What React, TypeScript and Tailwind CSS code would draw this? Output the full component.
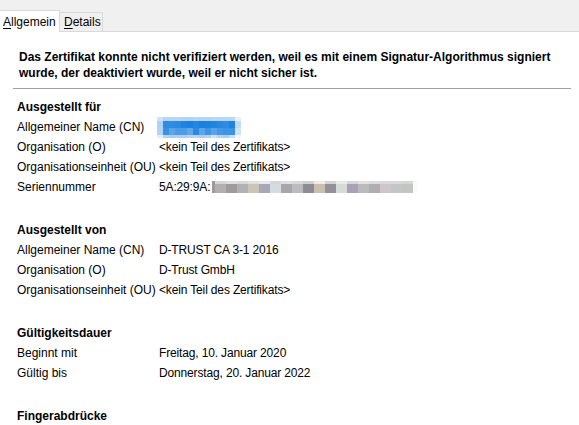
import type { ReactNode } from "react";

const cnBlur = {
  top: ["#cfe3f7", "#b7d6f4", "#b5d5f4", "#b6d6f4", "#b4d4f3", "#b3d3f3", "#b6d6f4", "#b5d5f4", "#b4d4f3", "#b6d6f4", "#b5d5f4", "#b8d7f4", "#b9d8f5", "#e6f1fb"],
  mid: ["#b0d2f3", "#2e8be2", "#2f8ce3", "#2b89e3", "#1f83e0", "#1b80df", "#2586e1", "#1a80e0", "#1c82e0", "#2185e1", "#2989e3", "#2e8ce4", "#1f84e0", "#bfdbf5"],
  low: ["#b4d4f3", "#3a91e3", "#5ba4e8", "#4b9be6", "#4d9ce6", "#62a8e9", "#2c89e1", "#5ca4e8", "#3f94e4", "#5aa3e8", "#4799e6", "#3e93e4", "#3b92e4", "#cfe3f7"],
  bottom: ["#e0edfa", "#b5d5f4", "#a8cef2", "#aed1f3", "#abcff2", "#b2d3f3", "#b6d5f4", "#a9cef2", "#b3d3f3", "#cde2f7", "#b0d2f3", "#a9cef2", "#c6def6", "#f1f7fd"],
};

const serialTop = ["#d8d6da", "#e3e0dc", "#dad8dc", "#e2e0dc", "#e6eaee", "#d7d6dc", "#e0e0e2", "#d9d8dc", "#d0d0d3", "#f1ece4", "#d4d4d8", "#e7ebe9", "#d8d6dd", "#e2e2e6", "#dcdcdb", "#dad7dd", "#d8dada", "#d6d6d6", "#f8fafd"];
const serialLow = ["#b3aeb0", "#9d9b9c", "#b0b2b5", "#cbc5b7", "#a9a6b5", "#d4dcdf", "#a7a7a9", "#bcbcbe", "#8e8c93", "#c8c0b0", "#929197", "#d5dbd6", "#aaa1b3", "#bbbbbe", "#aeaeae", "#cdc7cc", "#c3c6c6", "#c4c4c2", "#f8fafd"];

function CnBlur() {
  const rows = [cnBlur.top, cnBlur.mid, cnBlur.low, cnBlur.bottom];
  const heights = [4, 7, 7, 3];
  let y = 0;
  return (
    <svg width="84" height="21" viewBox="0 0 84 21" className="block">
      {rows.map((row, r) => {
        const top = y;
        y += heights[r];
        return row.map((color, c) => (
          <rect key={`${r}-${c}`} x={c * 6} y={top} width="6" height={heights[r]} fill={color} />
        ));
      })}
    </svg>
  );
}

function SerialBlur() {
  return (
    <svg width="206" height="12" viewBox="0 0 206 12" className="ml-[2px] block">
      <rect x="0" y="0" width="3" height="12" fill="#9a9aa0" />
      {serialTop.map((color, i) => (
        <rect key={`t${i}`} x={3 + i * 11} y="0" width="11" height="3" fill={color} />
      ))}
      {serialLow.map((color, i) => (
        <rect key={`l${i}`} x={3 + i * 11} y="3" width="11" height="9" fill={color} />
      ))}
    </svg>
  );
}

function Row({ label, children }: { label: string; children: ReactNode }) {
  return (
    <div className="flex h-[20px] items-center">
      <div className="w-[142px] shrink-0">{label}</div>
      <div className="flex items-center tracking-[-0.15px]">{children}</div>
    </div>
  );
}

function Section({ title, children }: { title: string; children?: ReactNode }) {
  return (
    <section className="mb-[23px]">
      <h2 className="flex h-[20px] items-center font-bold">{title}</h2>
      {children}
    </section>
  );
}

export default function App() {
  return (
    <div className="h-[425px] w-[579px] overflow-hidden bg-white font-['Liberation_Sans',Arial,sans-serif] text-[12px] text-black">
      <div className="flex h-[32px] items-end bg-[#f0f0f0]">
        <div className="flex h-[22px] w-[60px] items-center border-r border-t border-[#d9d9d9] bg-white pl-[3px]">
          <span>
            <span className="underline underline-offset-2">A</span>llgemein
          </span>
        </div>
        <div className="flex h-[20px] w-[43px] items-center border-b border-r border-t border-[#d9d9d9] bg-[#f0f0f0] pl-[4px]">
          <span>
            <span className="underline underline-offset-2">D</span>etails
          </span>
        </div>
        <div className="h-px flex-1 bg-[#d9d9d9]" />
      </div>

      <div className="pt-[17px]">
        <p className="pl-[19px] pr-[20px] font-bold leading-[16px]">
          Das Zertifikat konnte nicht verifiziert werden, weil es mit einem Signatur-Algorithmus signiert wurde, der
          deaktiviert wurde, weil er nicht sicher ist.
        </p>
        <div className="ml-[13px] mt-[7px] h-px w-[558px] bg-[#a0a0a0]" />

        <div className="pl-[17px] pt-[8px]">
          <Section title="Ausgestellt für">
            <Row label="Allgemeiner Name (CN)">
              <div className="-ml-[2px]">
                <CnBlur />
              </div>
            </Row>
            <Row label="Organisation (O)">&lt;kein Teil des Zertifikats&gt;</Row>
            <Row label="Organisationseinheit (OU)">&lt;kein Teil des Zertifikats&gt;</Row>
            <Row label="Seriennummer">
              <span>5A:29:9A:</span>
              <SerialBlur />
            </Row>
          </Section>

          <Section title="Ausgestellt von">
            <Row label="Allgemeiner Name (CN)">D-TRUST CA 3-1 2016</Row>
            <Row label="Organisation (O)">D-Trust GmbH</Row>
            <Row label="Organisationseinheit (OU)">&lt;kein Teil des Zertifikats&gt;</Row>
          </Section>

          <Section title="Gültigkeitsdauer">
            <Row label="Beginnt mit">Freitag, 10. Januar 2020</Row>
            <Row label="Gültig bis">Donnerstag, 20. Januar 2022</Row>
          </Section>

          <Section title="Fingerabdrücke" />
        </div>
      </div>
    </div>
  );
}
